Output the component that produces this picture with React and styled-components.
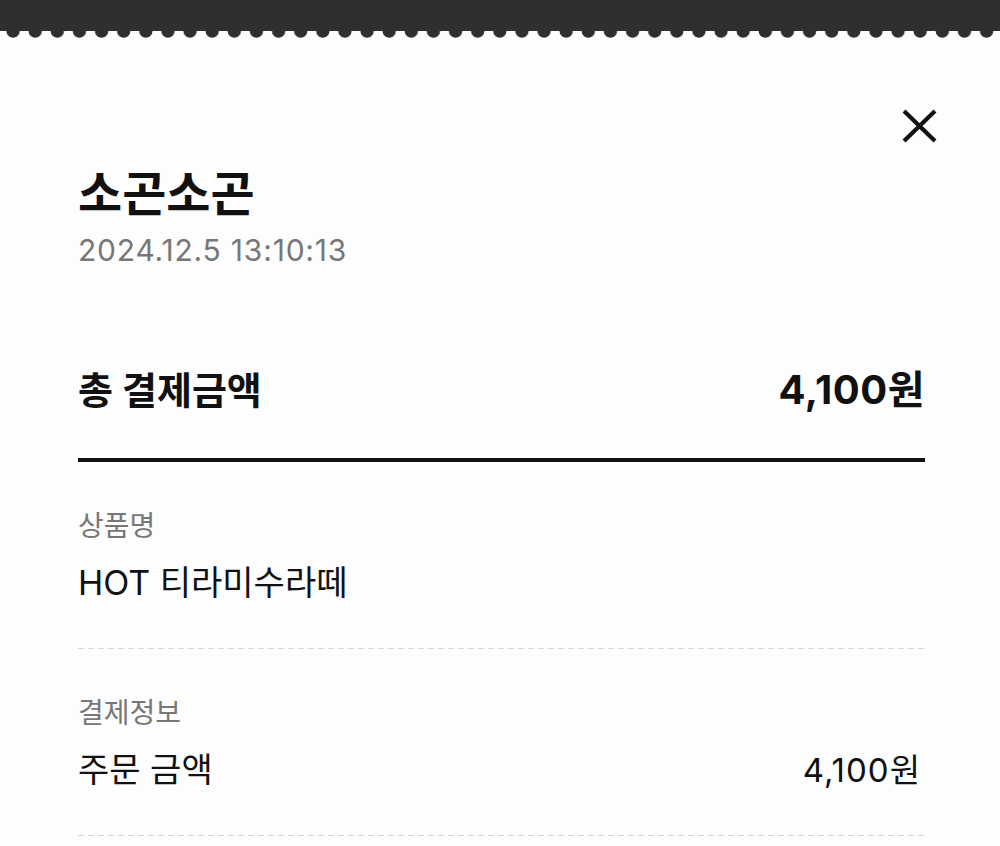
import React from 'react';
import styled, { createGlobalStyle } from 'styled-components';

const GlobalStyle = createGlobalStyle`
    html, body {
        margin: 0;
        padding: 0;
        background: #fdfdfd;
    }
    body {
        font-family: Inter, "Noto Sans CJK KR", sans-serif;
        color: #111;
    }
`;

const Page = styled.div`
    width: 1000px;
    min-height: 846px;
    background: #fdfdfd;
    overflow: hidden;
`;

const TopBand = styled.div`
    height: 31px;
    background: #2f2f2f;
`;

const Scallops = styled.div`
    height: 7px;
    background-image: radial-gradient(circle at 50% 0, #2f2f2f 6.3px, transparent 7px);
    background-size: 22.14px 7px;
    background-position: 2px 0;
    background-repeat: repeat-x;
`;

const Body = styled.div`
    padding: 0 75px 0 78px;
    display: flex;
    flex-direction: column;
`;

const CloseRow = styled.div`
    display: flex;
    justify-content: flex-end;
    margin-top: 71px;
    margin-right: -12px;
`;

const CloseButton = styled.button`
    width: 35px;
    height: 34px;
    padding: 0;
    border: none;
    background: none;
    display: flex;
    align-items: center;
    justify-content: center;
`;

const Title = styled.h1`
    margin: 26px 0 0;
    font-size: 48px;
    line-height: 50px;
    font-weight: 700;
    color: #111;
`;

const DateText = styled.div`
    margin-top: 13px;
    font-size: 30px;
    line-height: 36px;
    letter-spacing: 0.8px;
    color: #777;
`;

const TotalRow = styled.div`
    margin-top: 97px;
    display: flex;
    justify-content: space-between;
    align-items: center;
    height: 50px;
    padding-bottom: 43px;
    border-bottom: 4px solid #111;
`;

const TotalText = styled.span`
    font-size: ${props => props.size || '38px'};
    letter-spacing: ${props => props.spacing || '0'};
    font-weight: 700;
    line-height: 50px;
    color: #111;
`;

const Section = styled.div`
    padding: 46px 0 46px;
    background-image: repeating-linear-gradient(to right, #d6d6d6 0 6px, transparent 6px 10px);
    background-size: 100% 1px;
    background-position: 0 100%;
    background-repeat: no-repeat;
`;

const Label = styled.div`
    font-size: 28px;
    line-height: 36px;
    color: #777;
`;

const ValueRow = styled.div`
    margin-top: 19px;
    display: flex;
    justify-content: space-between;
    align-items: center;
    font-size: 34px;
    line-height: 40px;
    color: #111;
    padding-right: ${props => props.inset || '0'};
`;

const Amount = styled.span`
    font-size: 33px;
    letter-spacing: 1px;
`;

const CloseIcon = () => (
    <svg width="35" height="34" viewBox="0 0 35 34">
        <path d="M2 2 L33 32 M33 2 L2 32" stroke="#111" strokeWidth="4.2" fill="none" />
    </svg>
);

const App = () => {
    return <Page>
        <GlobalStyle />
        <TopBand />
        <Scallops />
        <Body>
            <CloseRow>
                <CloseButton aria-label="닫기"><CloseIcon /></CloseButton>
            </CloseRow>
            <Title>소곤소곤</Title>
            <DateText>2024.12.5 13:10:13</DateText>
            <TotalRow>
                <TotalText>총 결제금액</TotalText>
                <TotalText size="40px" spacing="0.5px">4,100원</TotalText>
            </TotalRow>
            <Section>
                <Label>상품명</Label>
                <ValueRow>HOT 티라미수라떼</ValueRow>
            </Section>
            <Section>
                <Label>결제정보</Label>
                <ValueRow inset="4px">
                    <span>주문 금액</span>
                    <Amount>4,100원</Amount>
                </ValueRow>
            </Section>
        </Body>
    </Page>
}

export default App;
